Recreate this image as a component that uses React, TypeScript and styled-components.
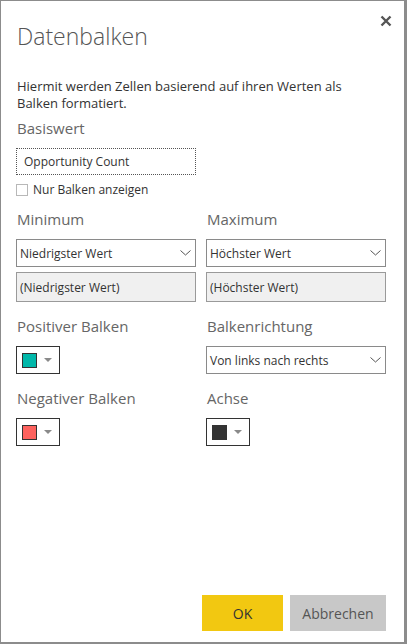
import styled, { createGlobalStyle } from "styled-components";

const GlobalStyle = createGlobalStyle`
  html, body {
    margin: 0;
    padding: 0;
    background: #ffffff;
  }
  * {
    box-sizing: border-box;
  }
`;

const Dialog = styled.div`
  width: 407px;
  height: 644px;
  display: flex;
  flex-direction: column;
  padding: 0 20px 11px 15px;
  border: 1px solid #8c8c8c;
  border-right-width: 3px;
  border-bottom-width: 2px;
  background: #ffffff;
  font-family: "Open Sans", "Noto Sans", sans-serif;
  color: #333333;
`;

const Header = styled.div`
  display: flex;
  justify-content: space-between;
  align-items: flex-start;
`;

const Title = styled.h1`
  margin: 20px 0 0 1px;
  font-size: 23px;
  font-weight: 300;
  line-height: 30px;
  color: #555555;
`;

const CloseButton = styled.button`
  margin: 13px -9px 0 0;
  width: 14px;
  height: 14px;
  padding: 0;
  border: none;
  background: none;
  cursor: pointer;
  display: flex;
  align-items: center;
  justify-content: center;
`;

const Description = styled.p`
  margin: 27px 0 0 1px;
  font-size: 13px;
  line-height: 17px;
  color: #333333;
`;

const Label = styled.div`
  margin: 0 0 0 1px;
  font-size: 15px;
  line-height: 20px;
  color: #666666;
`;

const Section = styled.div<{ $top: number }>`
  margin-top: ${(p) => p.$top}px;
  display: flex;
  flex-direction: column;
`;

const Grid = styled.div<{ $top: number }>`
  margin-top: ${(p) => p.$top}px;
  display: grid;
  grid-template-columns: 180px 180px;
  column-gap: 10px;
  row-gap: 14px;
`;

const Field = styled.div`
  display: flex;
  flex-direction: column;
`;

const TextBox = styled.div`
  margin-top: 10px;
  width: 180px;
  height: 27px;
  display: flex;
  align-items: center;
  padding: 0 7px;
  border: 1px dotted #555555;
  font-size: 12px;
  color: #333333;
`;

const CheckRow = styled.label`
  margin-top: 6px;
  display: flex;
  align-items: center;
  gap: 5px;
  font-size: 12px;
  color: #333333;
`;

const CheckBox = styled.span`
  width: 12px;
  height: 12px;
  border: 1px solid #b8b8b8;
  background: #ffffff;
`;

const Select = styled.div`
  margin-top: 10px;
  height: 28px;
  display: flex;
  align-items: center;
  justify-content: space-between;
  padding: 0 4px 0 3px;
  border: 1px solid #8a8a8a;
  font-size: 12px;
  color: #333333;
  background: #ffffff;
`;

const ReadOnlyBox = styled.div`
  margin-top: 5px;
  height: 30px;
  display: flex;
  align-items: center;
  padding: 0 3px;
  border: 1px solid #9a9a9a;
  background: #f0f0f0;
  font-size: 12px;
  color: #333333;
`;

const ColorPicker = styled.div`
  margin-top: 10px;
  width: 44px;
  height: 28px;
  display: flex;
  align-items: center;
  gap: 7px;
  padding-left: 5px;
  border: 1px solid #333333;
  background: #ffffff;
`;

const Swatch = styled.span<{ $color: string }>`
  width: 15px;
  height: 15px;
  border: 1px solid #333333;
  background: ${(p) => p.$color};
`;

const Caret = styled.span`
  width: 0;
  height: 0;
  border-left: 4px solid transparent;
  border-right: 4px solid transparent;
  border-top: 4px solid #8a8a8a;
`;

const Footer = styled.div`
  margin: auto -2px 0 0;
  display: flex;
  justify-content: flex-end;
  gap: 7px;
`;

const Button = styled.button<{ $primary?: boolean }>`
  height: 36px;
  min-width: ${(p) => (p.$primary ? "81px" : "96px")};
  border: none;
  padding: 0 10px;
  font-family: inherit;
  font-size: 14px;
  color: ${(p) => (p.$primary ? "#333333" : "#555555")};
  background: ${(p) => (p.$primary ? "#f2c811" : "#c8c8c8")};
  cursor: pointer;
`;

const Chevron = () => (
  <svg width="11" height="6" viewBox="0 0 11 6">
    <path d="M0.5 0.5 L5.5 5 L10.5 0.5" fill="none" stroke="#555" strokeWidth="1" />
  </svg>
);

const CloseIcon = () => (
  <svg width="12" height="12" viewBox="0 0 12 12">
    <path d="M1.5 1.5 L10.5 10.5 M10.5 1.5 L1.5 10.5" stroke="#555" strokeWidth="2.4" />
  </svg>
);

export default function App() {
  return (
    <>
      <GlobalStyle />
      <Dialog>
        <Header>
          <Title>Datenbalken</Title>
          <CloseButton aria-label="Schließen">
            <CloseIcon />
          </CloseButton>
        </Header>
        <Description>
          Hiermit werden Zellen basierend auf ihren Werten als Balken formatiert.
        </Description>

        <Section $top={6}>
          <Label>Basiswert</Label>
          <TextBox>Opportunity Count</TextBox>
          <CheckRow>
            <CheckBox />
            Nur Balken anzeigen
          </CheckRow>
        </Section>

        <Grid $top={11}>
          <Field>
            <Label>Minimum</Label>
            <Select>
              Niedrigster Wert
              <Chevron />
            </Select>
            <ReadOnlyBox>(Niedrigster Wert)</ReadOnlyBox>
          </Field>
          <Field>
            <Label>Maximum</Label>
            <Select>
              Höchster Wert
              <Chevron />
            </Select>
            <ReadOnlyBox>(Höchster Wert)</ReadOnlyBox>
          </Field>
          <Field>
            <Label>Positiver Balken</Label>
            <ColorPicker>
              <Swatch $color="#01b8aa" />
              <Caret />
            </ColorPicker>
          </Field>
          <Field>
            <Label>Balkenrichtung</Label>
            <Select>
              Von links nach rechts
              <Chevron />
            </Select>
          </Field>
          <Field>
            <Label>Negativer Balken</Label>
            <ColorPicker>
              <Swatch $color="#fd625e" />
              <Caret />
            </ColorPicker>
          </Field>
          <Field>
            <Label>Achse</Label>
            <ColorPicker>
              <Swatch $color="#333333" />
              <Caret />
            </ColorPicker>
          </Field>
        </Grid>

        <Footer>
          <Button $primary>OK</Button>
          <Button>Abbrechen</Button>
        </Footer>
      </Dialog>
    </>
  );
}
